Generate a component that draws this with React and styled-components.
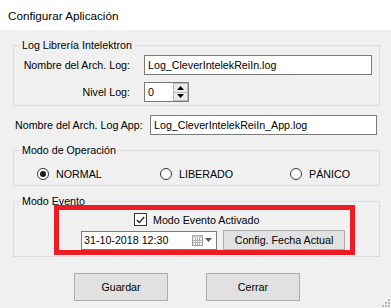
import React from "react";
import styled, { createGlobalStyle } from "styled-components";

const GlobalStyle = createGlobalStyle`
  html, body {
    margin: 0;
    padding: 0;
    background: #f0f0f0;
  }
  body {
    font-family: "Liberation Sans", Arial, sans-serif;
  }
`;

const Window = styled.div`
  position: relative;
  width: 391px;
  height: 308px;
  overflow: hidden;
  background: #f0f0f0;
  color: #000;
  font-size: 10.7px;
`;

const TitleBar = styled.div`
  height: 30px;
  display: flex;
  align-items: center;
  padding-left: 8px;
  background: #fff;
  font-size: 11.7px;
`;

const Content = styled.div`
  display: flex;
  flex-direction: column;
  padding: 0 11px 0 13px;
`;

const Group = styled.div`
  position: relative;
  margin-top: 15px;
  border: 1px solid #dcdcdc;
  padding: ${(p) => p.$pad};
`;

const Legend = styled.span`
  position: absolute;
  top: -7px;
  left: 6px;
  padding: 0 2px;
  line-height: 13px;
  background: #f0f0f0;
`;

const FieldRow = styled.div`
  display: flex;
  align-items: center;
  height: 20px;
  margin-top: ${(p) => p.$mt || 0}px;
  margin-left: ${(p) => p.$ml || 0}px;
`;

const Label = styled.span`
  width: ${(p) => p.$w}px;
  text-align: ${(p) => (p.$left ? "left" : "right")};
  flex-shrink: 0;
`;

const TextBox = styled.div`
  box-sizing: border-box;
  width: ${(p) => p.$w}px;
  height: 20px;
  margin-left: ${(p) => p.$ml || 0}px;
  display: flex;
  align-items: center;
  padding-left: 3px;
  border: 1px solid #7a7a7a;
  background: #fff;
  white-space: nowrap;
`;

const Value = styled.span`
  flex: 1;
`;

const Spin = styled.div`
  display: flex;
  flex-direction: column;
  width: 15px;
  height: 18px;
  margin-right: 0;
`;

const SpinBtn = styled.div`
  flex: 1;
  display: flex;
  align-items: center;
  justify-content: center;
  border: 1px solid #b9b9b9;
  background: #ececec;
  & + & {
    border-top: none;
  }
`;

const RadioRow = styled.div`
  display: grid;
  grid-template-columns: 123px 130px auto;
  align-items: center;
  height: 14px;
  padding-left: 23px;
`;

const Option = styled.div`
  display: flex;
  align-items: center;
  gap: 7px;
`;

const RadioDot = styled.span`
  box-sizing: border-box;
  width: 12px;
  height: 12px;
  border-radius: 50%;
  border: 1px solid #333;
  background: #fff;
  display: flex;
  align-items: center;
  justify-content: center;
  &::after {
    content: "";
    width: 6px;
    height: 6px;
    border-radius: 50%;
    background: ${(p) => (p.$on ? "#1a1a1a" : "transparent")};
  }
`;

const CheckRow = styled.div`
  display: flex;
  align-items: center;
  gap: 6px;
  height: 15px;
  padding-left: 120px;
`;

const CheckBox = styled.span`
  box-sizing: border-box;
  width: 13px;
  height: 13px;
  border: 1px solid #333;
  background: #fff;
  display: flex;
  align-items: center;
  justify-content: center;
`;

const DateRow = styled.div`
  display: flex;
  align-items: center;
  gap: 6px;
  margin: 3px 0 0 67px;
  height: 20px;
`;

const DatePicker = styled.div`
  box-sizing: border-box;
  width: 136px;
  height: 19px;
  display: flex;
  align-items: center;
  gap: 2px;
  padding: 0 4px 0 2px;
  border: 1px solid #7a7a7a;
  background: #fff;
`;

const Button = styled.div`
  box-sizing: border-box;
  width: ${(p) => p.$w}px;
  height: ${(p) => p.$h}px;
  display: flex;
  align-items: center;
  justify-content: center;
  border: 1px solid #adadad;
  background: #e1e1e1;
`;

const Highlight = styled.div`
  position: absolute;
  left: 40px;
  top: 3px;
  width: 301px;
  height: 50px;
  box-sizing: border-box;
  border: 5px solid #ed1c24;
  pointer-events: none;
`;

const Actions = styled.div`
  display: flex;
  gap: 38px;
  margin: 16px 0 0 61px;
`;

const Grip = styled.svg`
  position: absolute;
  right: 1px;
  bottom: 1px;
`;

const Arrow = ({ up }) => (
  <svg width="7" height="4" viewBox="0 0 7 4">
    <path d={up ? "M3.5 0 L7 4 L0 4 Z" : "M0 0 L7 0 L3.5 4 Z"} fill="#000" />
  </svg>
);

const CalendarIcon = () => (
  <svg width="11" height="11" viewBox="0 0 11 11">
    <rect x="0.5" y="0.5" width="10" height="10" fill="#f4f4f4" stroke="#9a9a9a" />
    <rect x="0.5" y="0.5" width="10" height="2" fill="#c8c8c8" />
    <path d="M3.5 3 V10.5 M5.5 3 V10.5 M7.5 3 V10.5 M1 5.5 H10 M1 7.5 H10" stroke="#b4b4b4" />
  </svg>
);

const App = () => (
  <Window>
    <GlobalStyle />
    <TitleBar>Configurar Aplicación</TitleBar>
    <Content>
      <Group $pad="9px 0 3px 0">
        <Legend>Log Librería Intelektron</Legend>
        <FieldRow>
          <Label $w={116}>Nombre del Arch. Log:</Label>
          <TextBox $w={228} $ml={14}>
            Log_CleverIntelekReiIn.log
          </TextBox>
        </FieldRow>
        <FieldRow $mt={7}>
          <Label $w={116}>Nivel Log:</Label>
          <TextBox $w={45} $ml={14}>
            <Value>0</Value>
            <Spin>
              <SpinBtn>
                <Arrow up />
              </SpinBtn>
              <SpinBtn>
                <Arrow />
              </SpinBtn>
            </Spin>
          </TextBox>
        </FieldRow>
      </Group>

      <FieldRow $mt={9} $ml={2}>
        <Label $w={135} $left>
          Nombre del Arch. Log App:
        </Label>
        <TextBox $w={227}>Log_CleverIntelekReiIn_App.log</TextBox>
      </FieldRow>

      <Group $pad="16px 0 4px 0">
        <Legend>Modo de Operación</Legend>
        <RadioRow>
          <Option>
            <RadioDot $on />
            NORMAL
          </Option>
          <Option>
            <RadioDot />
            LIBERADO
          </Option>
          <Option>
            <RadioDot />
            PÁNICO
          </Option>
        </RadioRow>
      </Group>

      <Group $pad="10px 0 6px 0">
        <Legend>Modo Evento</Legend>
        <CheckRow>
          <CheckBox>
            <svg width="9" height="8" viewBox="0 0 9 8">
              <path d="M0.8 4 L3.3 6.5 L8.3 1" fill="none" stroke="#222" strokeWidth="1.3" />
            </svg>
          </CheckBox>
          Modo Evento Activado
        </CheckRow>
        <DateRow>
          <DatePicker>
            <Value>31-10-2018 12:30</Value>
            <CalendarIcon />
            <svg width="7" height="4" viewBox="0 0 7 4">
              <path d="M0 0 L7 0 L3.5 4 Z" fill="#4a5a70" />
            </svg>
          </DatePicker>
          <Button $w={122} $h={20}>
            Config. Fecha Actual
          </Button>
        </DateRow>
        <Highlight />
      </Group>

      <Actions>
        <Button $w={94} $h={28}>
          Guardar
        </Button>
        <Button $w={94} $h={28}>
          Cerrar
        </Button>
      </Actions>
    </Content>
    <Grip width="8" height="8" viewBox="0 0 8 8">
      {[
        [6, 0],
        [6, 3],
        [3, 3],
        [6, 6],
        [3, 6],
        [0, 6],
      ].map(([x, y]) => (
        <rect key={`${x}-${y}`} x={x} y={y} width="2" height="2" fill="#b8b8b8" />
      ))}
    </Grip>
  </Window>
);

export default App;
